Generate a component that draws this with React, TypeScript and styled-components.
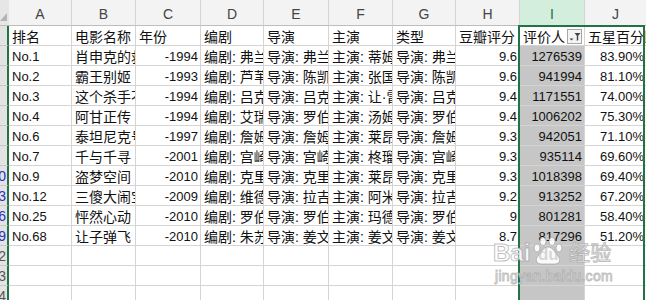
import React from 'react';
import styled, { createGlobalStyle } from 'styled-components';

const GlobalStyle = createGlobalStyle`
  html, body {
    margin: 0;
    padding: 0;
    background: #fff;
    overflow: hidden;
  }
  body {
    font-family: "Liberation Sans", "Noto Sans CJK SC", sans-serif;
  }
`;

const GRID = '#d4d4d4';
const GREEN = '#217346';

const Sheet = styled.div`
  position: relative;
  width: 646px;
  height: 300px;
  overflow: hidden;
  display: grid;
  grid-template-columns: 9px 63px 64px 65px 63px 65px 64px 63px 64px 65px 62px;
  grid-template-rows: 26px repeat(15, 20px);
  grid-auto-rows: 20px;
`;

const Corner = styled.div`
  background: #e6e6e6;
  border-bottom: 1px solid #bdbdbd;
  box-sizing: border-box;
  display: flex;
  align-items: flex-end;
  padding-bottom: 4px;
`;

const ColHead = styled.div<{ $active?: boolean }>`
  box-sizing: border-box;
  background: ${(p) => (p.$active ? '#d3eedd' : '#f3f3f3')};
  color: ${(p) => (p.$active ? GREEN : '#444')};
  border-right: 1px solid ${GRID};
  border-bottom: 1px solid #bdbdbd;
  font-size: 14px;
  display: flex;
  align-items: center;
  justify-content: center;
  padding-top: 2px;
`;

const RowHead = styled.div<{ $filtered?: boolean }>`
  box-sizing: border-box;
  background: #e3e3e3;
  border-right: 2px solid ${GREEN};
  border-bottom: 1px solid #c8c8c8;
  color: ${(p) => (p.$filtered ? '#2f2fbf' : '#555')};
  font-size: 14px;
  display: flex;
  align-items: center;
  justify-content: flex-end;
  overflow: hidden;
  white-space: nowrap;
  padding-right: 1px;
`;

const Cell = styled.div<{ $right?: boolean; $selected?: boolean; $num?: boolean }>`
  box-sizing: border-box;
  background: ${(p) => (p.$selected ? '#c6c6c6' : '#fff')};
  border-right: 1px solid ${GRID};
  border-bottom: 1px solid ${GRID};
  color: #111;
  font-size: ${(p) => (p.$num ? '13px' : '14px')};
  display: flex;
  align-items: center;
  justify-content: ${(p) => (p.$right ? 'flex-end' : 'flex-start')};
  padding: 1px 2px 0 3px;
  overflow: hidden;
  white-space: nowrap;
  min-width: 0;
`;

const ActiveCell = styled(Cell)`
  justify-content: space-between;
  padding-right: 2px;
`;

/* absolutely positioned grid child: uses column I as its box, takes no cells */
const Selection = styled.div`
  position: absolute;
  grid-column: 10;
  grid-row: 2 / -1;
  top: -1px;
  bottom: 0;
  left: -2px;
  right: 1px;
  border: 2px solid ${GREEN};
  pointer-events: none;
  z-index: 2;
`;

const Watermark = styled.div`
  position: absolute;
  left: 493px;
  top: 237px;
  z-index: 3;
  pointer-events: none;
  color: rgba(255, 255, 255, 0.9);
  -webkit-text-stroke: 1px rgba(150, 150, 150, 0.6);
  font-family: "Liberation Sans", "Noto Sans CJK SC", sans-serif;
`;

const MarkTop = styled.div`
  display: flex;
  align-items: flex-end;
  height: 28px;
`;

const Brand = styled.span`
  font-size: 24px;
  font-weight: bold;
  line-height: 24px;
`;

const Paw = styled.span`
  position: relative;
  display: inline-flex;
  align-items: flex-end;
  justify-content: center;
  width: 32px;
  height: 28px;
  margin: 0 3px 0 2px;
`;

const PawText = styled.span`
  position: relative;
  font-size: 17px;
  font-weight: bold;
  line-height: 20px;
  -webkit-text-stroke: 0;
  color: rgba(190, 190, 190, 0.6);
`;

const MarkCn = styled.span`
  font-size: 21px;
  line-height: 24px;
  margin-left: 2px;
`;

const MarkUrl = styled.div`
  font-size: 14px;
  letter-spacing: 0.3px;
  margin-top: 3px;
  padding-left: 2px;
`;

const FilterButton = () => (
  <svg width="15" height="15" viewBox="0 0 15 15">
    <rect x="0.5" y="0.5" width="14" height="14" fill="#f4f4f4" stroke="#a8a8a8" />
    <path d="M2.5 9.5 h4 l-2 2 z" fill="#444" />
    <path d="M7.5 4 h6 l-2.3 2.8 v4.2 l-1.4 1 v-5.2 z" fill="#444" />
  </svg>
);

const CornerMark = () => (
  <svg width="7" height="8" viewBox="0 0 7 8">
    <path d="M7 0 V8 H0 Z" fill="#b4b4b4" />
  </svg>
);

const PawIcon = () => (
  <svg width="32" height="28" viewBox="0 0 32 28" style={{ position: 'absolute', left: 0, top: 0 }}>
    <g fill="rgba(255,255,255,0.9)" stroke="rgba(150,150,150,0.6)" strokeWidth="1">
      <ellipse cx="5" cy="11" rx="3" ry="4" />
      <ellipse cx="11" cy="4.5" rx="3" ry="4" />
      <ellipse cx="20" cy="4.5" rx="3" ry="4" />
      <ellipse cx="27" cy="11" rx="3" ry="4" />
      <path d="M16 10 C11 10 9 16 6 19 C3 22 4 27 9 27 L23 27 C28 27 29 22 26 19 C23 16 21 10 16 10 Z" />
    </g>
  </svg>
);

type Row = {
  head: string;
  cells: string[];
};

const header = ['排名', '电影名称', '年份', '编剧', '导演', '主演', '类型', '豆瓣评分', '评价人', '五星百分比'];

const rows: Row[] = [
  { head: '', cells: ['No.1', '肖申克的救赎', '-1994', '编剧: 弗兰克·德拉邦特', '导演: 弗兰克·德拉邦特', '主演: 蒂姆·罗宾斯', '导演: 弗兰克', '9.6', '1276539', '83.90%'] },
  { head: '', cells: ['No.2', '霸王别姬', '-1993', '编剧: 芦苇', '导演: 陈凯歌', '主演: 张国荣', '导演: 陈凯歌', '9.6', '941994', '81.10%'] },
  { head: '', cells: ['No.3', '这个杀手不太冷', '-1994', '编剧: 吕克·贝松', '导演: 吕克·贝松', '主演: 让·雷诺', '导演: 吕克', '9.4', '1171551', '74.00%'] },
  { head: '', cells: ['No.4', '阿甘正传', '-1994', '编剧: 艾瑞克·罗斯', '导演: 罗伯特·泽米吉斯', '主演: 汤姆·汉克斯', '导演: 罗伯特', '9.4', '1006202', '75.30%'] },
  { head: '', cells: ['No.6', '泰坦尼克号', '-1997', '编剧: 詹姆斯·卡梅隆', '导演: 詹姆斯', '主演: 莱昂纳多', '导演: 詹姆斯', '9.3', '942051', '71.10%'] },
  { head: '', cells: ['No.7', '千与千寻', '-2001', '编剧: 宫崎骏', '导演: 宫崎骏', '主演: 柊瑠美', '导演: 宫崎骏', '9.3', '935114', '69.60%'] },
  { head: '10', cells: ['No.9', '盗梦空间', '-2010', '编剧: 克里斯托弗', '导演: 克里斯托弗', '主演: 莱昂纳多', '导演: 克里', '9.3', '1018398', '69.40%'] },
  { head: '13', cells: ['No.12', '三傻大闹宝莱坞', '-2009', '编剧: 维德胡', '导演: 拉吉库马尔', '主演: 阿米尔·汗', '导演: 拉吉', '9.2', '913252', '67.20%'] },
  { head: '26', cells: ['No.25', '怦然心动', '-2010', '编剧: 罗伯·莱纳', '导演: 罗伯·莱纳', '主演: 玛德琳', '导演: 罗伯', '9', '801281', '58.40%'] },
  { head: '69', cells: ['No.68', '让子弹飞', '-2010', '编剧: 朱苏进', '导演: 姜文', '主演: 姜文', '导演: 姜文', '8.7', '817296', '51.20%'] },
];

const empties = ['252', '253', '254', '255'];
const letters = ['A', 'B', 'C', 'D', 'E', 'F', 'G', 'H', 'I', 'J'];
const rightCols = [2, 7, 8, 9];

const App: React.FC = () => {
  return (
    <>
      <GlobalStyle />
      <Sheet>
        <Corner>
          <CornerMark />
        </Corner>
        {letters.map((l, i) => (
          <ColHead key={l} $active={i === 8}>
            {l}
          </ColHead>
        ))}

        <RowHead />
        {header.map((h, i) =>
          i === 8 ? (
            <ActiveCell key={h}>
              {h}
              <FilterButton />
            </ActiveCell>
          ) : (
            <Cell key={h}>{h}</Cell>
          )
        )}

        {rows.map((r, ri) => (
          <React.Fragment key={ri}>
            <RowHead $filtered>{r.head}</RowHead>
            {r.cells.map((c, ci) => (
              <Cell
                key={ci}
                $right={rightCols.includes(ci)}
                $num={ci === 0 || rightCols.includes(ci)}
                $selected={ci === 8}
              >
                {c}
              </Cell>
            ))}
          </React.Fragment>
        ))}

        {empties.map((n) => (
          <React.Fragment key={n}>
            <RowHead>{n}</RowHead>
            {letters.map((l, ci) => (
              <Cell key={l} $selected={ci === 8} />
            ))}
          </React.Fragment>
        ))}

        <Selection />

        <Watermark>
          <MarkTop>
            <Brand>Bai</Brand>
            <Paw>
              <PawIcon />
              <PawText>du</PawText>
            </Paw>
            <MarkCn>经验</MarkCn>
          </MarkTop>
          <MarkUrl>jingyan.baidu.com</MarkUrl>
        </Watermark>
      </Sheet>
    </>
  );
};

export default App;
